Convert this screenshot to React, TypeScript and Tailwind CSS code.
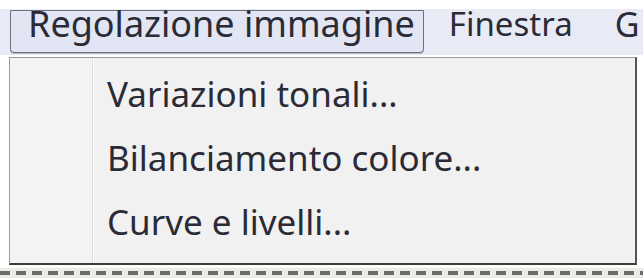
import React from 'react';

const items = ['Variazioni tonali...', 'Bilanciamento colore...', 'Curve e livelli...'];

const App: React.FC = () => {
  return (
    <div className="w-[643px] h-[279px] bg-white overflow-hidden font-['Noto_Sans',sans-serif] text-[#2b2b36]">
      {/* Menu bar */}
      <div className="mt-[9px] h-[46px] bg-[#e8ebf5] flex items-start whitespace-nowrap">
        <div className="ml-[10px] mt-[1px] h-[43px] shrink-0 pl-[17px] pr-[8px] border border-[#6c717d] rounded-b-[4px] bg-[#e2e6f4] text-[36px] leading-[26px] shadow-[0_1px_0_#b9bcc6]">
          Regolazione immagine
        </div>
        <div className="ml-[25px] mt-[2px] shrink-0 text-[33px] leading-[26px]">Finestra</div>
        <div className="ml-[42px] mt-[2px] shrink-0 text-[34px] leading-[26px]">G</div>
      </div>

      {/* Dropdown */}
      <div className="ml-[9px] mt-[2px] w-[628px] h-[208px] bg-[#f1f1f1] border border-[#9a9a9a] border-r-[#555] border-b-[#3d3d3d] border-b-2 border-r-2 flex">
        <div className="w-[83px] shrink-0 bg-[#f3f3f3] border-r border-[#dcdcdc]" />
        <div className="w-px bg-white" />
        <div className="flex flex-col pl-[13px] pt-[4px] text-[35px]">
          {items.map((item) => (
            <div key={item} className="h-[64px] leading-[64px] whitespace-nowrap">
              {item}
            </div>
          ))}
        </div>
      </div>

      {/* Dashed strip below */}
      <div className="mt-[3px] h-[10px] bg-[#ecebe6] flex items-center">
        <div className="w-full h-[4px] bg-[repeating-linear-gradient(90deg,#6b6b6b_0_10px,transparent_10px_16px)]" />
      </div>
    </div>
  );
};

export default App;
